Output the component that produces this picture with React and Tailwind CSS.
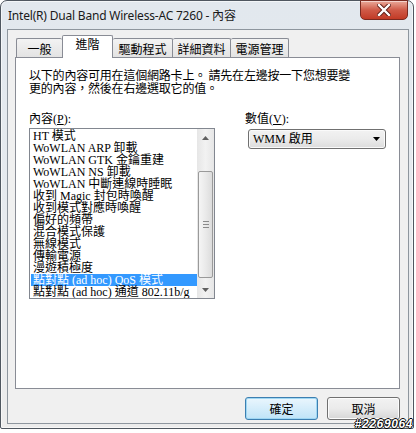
import { useState } from "react";

/* ─── DATA ──────────────────────────────────────────── */
const ITEMS = [
  "HT 模式",
  "WoWLAN ARP 卸載",
  "WoWLAN GTK 金鑰重建",
  "WoWLAN NS 卸載",
  "WoWLAN 中斷連線時睡眠",
  "收到 Magic 封包時喚醒",
  "收到模式對應時喚醒",
  "偏好的頻帶",
  "混合模式保護",
  "無線模式",
  "傳輸電源",
  "漫遊積極度",
  "點對點 (ad hoc) QoS 模式",
  "點對點 (ad hoc) 通道 802.11b/g",
];

const TABS = [
  { label: "一般", w: "w-[46px]" },
  { label: "進階", w: "w-[51px]" },
  { label: "驅動程式", w: "w-[60px]" },
  { label: "詳細資料", w: "w-[58px]" },
  { label: "電源管理", w: "w-[58px]" },
];

/* ─── CLOSE BUTTON ──────────────────────────────────── */
function CloseButton() {
  return (
    <div className="-mt-[1px] mr-[1px] w-[48px] h-[20px] rounded-b-[5px] border border-[#7a2a20] bg-gradient-to-b from-[#e9a99a] via-[#cf5a47] to-[#c23a25] shadow-[inset_0_1px_0_rgba(255,255,255,0.5)] flex items-center justify-center">
      <svg width="14" height="12" viewBox="0 0 14 12">
        <path
          d="M2 1 L12 11 M12 1 L2 11"
          stroke="#5a1a12"
          strokeWidth="4.2"
          strokeLinecap="square"
        />
        <path
          d="M2 1 L12 11 M12 1 L2 11"
          stroke="#ffffff"
          strokeWidth="2.4"
          strokeLinecap="square"
        />
      </svg>
    </div>
  );
}

/* ─── TAB STRIP ─────────────────────────────────────── */
function Tabs({ active }) {
  return (
    <div className="flex items-end h-[22px] pl-[1px] font-['Noto_Sans_CJK_TC',sans-serif] text-[12px]">
      {TABS.map((t, i) => {
        const on = i === active;
        if (on) {
          return (
            <div
              key={t.label}
              className={`${t.w} h-[23px] -mb-[1px] relative z-10 bg-white border border-b-0 border-[#898c95] rounded-t-[2px] flex justify-center pt-[1px] leading-[14px]`}
            >
              {t.label}
            </div>
          );
        }
        return (
          <div
            key={t.label}
            className={`${t.w} h-[19px] bg-gradient-to-b from-[#f3f3f3] to-[#e3e3e3] border-t border-[#898c95] ${
              i === 0 ? "border-l" : "border-r"
            } rounded-t-[2px] flex items-center justify-center leading-[14px] pt-[2px]`}
          >
            {t.label}
          </div>
        );
      })}
    </div>
  );
}

/* ─── SCROLLBAR ─────────────────────────────────────── */
function Scrollbar() {
  return (
    <div className="w-[17px] bg-gradient-to-r from-[#e6e6e6] via-[#f2f2f2] to-[#e6e6e6] flex flex-col">
      <div className="h-[17px] flex items-center justify-center">
        <svg width="7" height="4" viewBox="0 0 7 4">
          <path d="M0 4 L3.5 0 L7 4 Z" fill="#606060" />
        </svg>
      </div>
      <div className="h-[25px]" />
      <div className="mx-[1px] h-[107px] rounded-[2px] border border-[#9a9a9a] bg-gradient-to-r from-[#f5f5f5] via-[#eaeaea] to-[#dcdcdc] flex flex-col items-center justify-center gap-[2px]">
        <div className="w-[6px] h-px bg-[#8a8a8a]" />
        <div className="w-[6px] h-px bg-[#8a8a8a]" />
        <div className="w-[6px] h-px bg-[#8a8a8a]" />
      </div>
      <div className="flex-1" />
      <div className="h-[17px] flex items-center justify-center">
        <svg width="7" height="4" viewBox="0 0 7 4">
          <path d="M0 0 L7 0 L3.5 4 Z" fill="#606060" />
        </svg>
      </div>
    </div>
  );
}

/* ─── LIST BOX ──────────────────────────────────────── */
function ListBox({ selected, onSelect }) {
  return (
    <div className="w-[186px] h-[171px] border border-[#828790] bg-white flex">
      <div className="flex-1 pt-[1px] pl-[1px] overflow-hidden">
        {ITEMS.map((it, i) => (
          <div
            key={it}
            onClick={() => onSelect(i)}
            className={`h-[12px] leading-[12px] pl-[2px] whitespace-nowrap ${
              i === selected ? "bg-[#3399ff] text-white" : ""
            }`}
          >
            {it}
          </div>
        ))}
      </div>
      <Scrollbar />
    </div>
  );
}

/* ─── BUTTON ────────────────────────────────────────── */
function Button({ children, primary }) {
  return (
    <button
      className={`w-[73px] h-[23px] rounded-[3px] border font-['Noto_Sans_CJK_TC',sans-serif] text-[12px] leading-[14px] ${
        primary
          ? "border-[#3c7fb1] bg-gradient-to-b from-[#eaf6fd] to-[#bfe4f8] shadow-[inset_0_0_0_1px_#9fd7f3]"
          : "border-[#707070] bg-gradient-to-b from-[#f2f2f2] via-[#ebebeb] to-[#d6d6d6] shadow-[inset_0_0_0_1px_#fcfcfc]"
      }`}
    >
      {children}
    </button>
  );
}

/* ─── APP ───────────────────────────────────────────── */
export default function App() {
  const [sel, setSel] = useState(12);

  return (
    <div className="w-[416px] h-[433px] bg-white relative text-black font-['Liberation_Serif','Noto_Sans_CJK_TC',serif] text-[12px]">
      <div className="w-[414px] h-[429px] rounded-t-[7px] rounded-b-[2px] border border-[#4f5760] bg-gradient-to-b from-[#e2e8ee] via-[#e6eaee] to-[#ececec] shadow-[inset_0_0_0_1px_rgba(255,255,255,0.6)] flex flex-col pl-[6px] pr-[4px] pb-[4px]">
        {/* title bar */}
        <div className="h-[28px] flex items-start justify-between">
          <span className="mt-[6px] pl-[1px] font-['Noto_Sans','Noto_Sans_CJK_TC',sans-serif] text-[12px] tracking-[-0.2px] text-[#1a1a1a]">
            Intel(R) Dual Band Wireless-AC 7260 - 內容
          </span>
          <CloseButton />
        </div>

        {/* client area */}
        <div className="flex-1 border border-[#8e969e] bg-[#f0f0f0] flex flex-col pt-[5px] pl-[7px] pr-[8px]">
          <Tabs active={1} />

          <div className="h-[332px] border border-[#898c95] bg-white flex flex-col pl-[13px] pr-[12px]">
            <p className="mt-[10px] leading-[13px] font-['Noto_Sans_CJK_TC',sans-serif] tracking-[-0.2px]">
              以下的內容可用在這個網路卡上。 請先在左邊按一下您想要變
              <br />
              更的內容，然後在右邊選取它的值。
            </p>

            <div className="mt-[19px] flex">
              <div className="flex flex-col">
                <div className="h-[15px] leading-[13px]">
                  內容(<u>P</u>):
                </div>
                <ListBox selected={sel} onSelect={setSel} />
              </div>

              <div className="ml-[30px] flex flex-col">
                <div className="h-[16px] leading-[13px]">
                  數值(<u>V</u>):
                </div>
                <div className="ml-[3px] w-[138px] h-[20px] rounded-[3px] border border-[#707070] bg-gradient-to-b from-[#f2f2f2] via-[#ebebeb] to-[#dcdcdc] shadow-[inset_0_0_0_1px_#fafafa] flex items-center justify-between pl-[4px] pr-[5px]">
                  <span className="leading-[12px]">WMM 啟用</span>
                  <svg width="7" height="4" viewBox="0 0 7 4">
                    <path d="M0 0 L7 0 L3.5 4 Z" fill="#000" />
                  </svg>
                </div>
              </div>
            </div>
          </div>

          <div className="mt-[8px] flex justify-end gap-[9px]">
            <Button primary>確定</Button>
            <Button>取消</Button>
          </div>
        </div>
      </div>

      {/* watermark */}
      <div className="absolute right-[3px] bottom-[3px] font-['Liberation_Sans',sans-serif] font-bold italic text-[12px] leading-[11px] tracking-[0.6px] text-white [text-shadow:_1px_0_0_#000,_-1px_0_0_#000,_0_1px_0_#000,_0_-1px_0_#000]">
        #2269064
      </div>
    </div>
  );
}
